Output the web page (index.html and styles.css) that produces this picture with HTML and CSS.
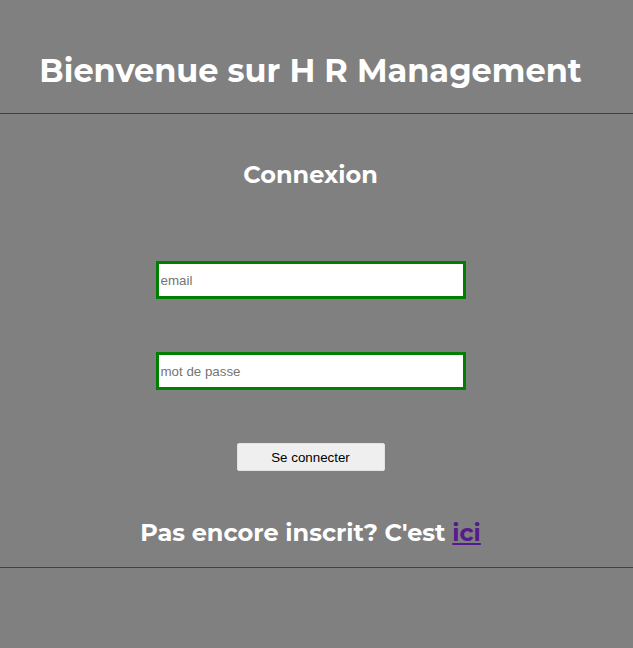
FILE: index.html
```html
<!DOCTYPE html>
<html lang="fr">
<head>
<meta charset="utf-8">
<title>H R Management</title>
<link rel="stylesheet" href="styles.css">
</head>
<body>
<header class="header">
  <h1 class="title">Bienvenue sur H R Management</h1>
</header>
<hr class="rule">
<main class="main">
  <h2 class="subtitle">Connexion</h2>
  <form class="form">
    <input class="field" type="email" placeholder="email">
    <input class="field" type="password" placeholder="mot de passe">
    <button class="btn" type="button">Se connecter</button>
  </form>
  <p class="signup">Pas encore inscrit? C'est <a class="link" href="#">ici</a></p>
</main>
<hr class="rule">
</body>
</html>
```
FILE: styles.css
```css
html, body {
  margin: 0;
  padding: 0;
}
body {
  background: #808080;
  font-family: Montserrat, "Open Sans", sans-serif;
  color: #ffffff;
  min-height: 648px;
}
.header {
  padding-top: 51px;
  padding-bottom: 22px;
  padding-right: 12px;
  display: flex;
  justify-content: center;
}
.title {
  margin: 0;
  font-size: 32px;
  line-height: 40px;
  font-weight: 700;
  text-align: center;
}
.rule {
  margin: 0;
  border: 0;
  height: 1px;
  background: #1e5a1e;
}
.main {
  display: flex;
  flex-direction: column;
  align-items: center;
  padding-top: 46px;
  padding-bottom: 19px;
  padding-right: 12px;
}
.subtitle {
  margin: 0;
  font-size: 24px;
  line-height: 30px;
  font-weight: 700;
}
.form {
  display: flex;
  flex-direction: column;
  align-items: center;
  margin-top: 71px;
}
.field {
  box-sizing: border-box;
  width: 310px;
  height: 38px;
  border: 3px solid #008000;
  background: #ffffff;
  padding: 0 2px;
  margin: 0 0 53px 0;
  font-family: "Liberation Sans", Arial, sans-serif;
  font-size: 13.33px;
  color: #000;
  outline: none;
}
.field::placeholder {
  color: #757575;
}
.btn {
  box-sizing: border-box;
  width: 148px;
  height: 28px;
  margin-top: 0;
  background: #efefef;
  border: 1px solid #e3e3e3;
  border-radius: 2px;
  font-family: "Liberation Sans", Arial, sans-serif;
  font-size: 13.33px;
  color: #000;
  padding: 0;
}
.signup {
  margin: 47px 0 0 0;
  font-size: 24px;
  line-height: 30px;
  font-weight: 700;
  text-align: center;
}
.link {
  color: #551a8b;
  text-decoration: underline;
}
```
